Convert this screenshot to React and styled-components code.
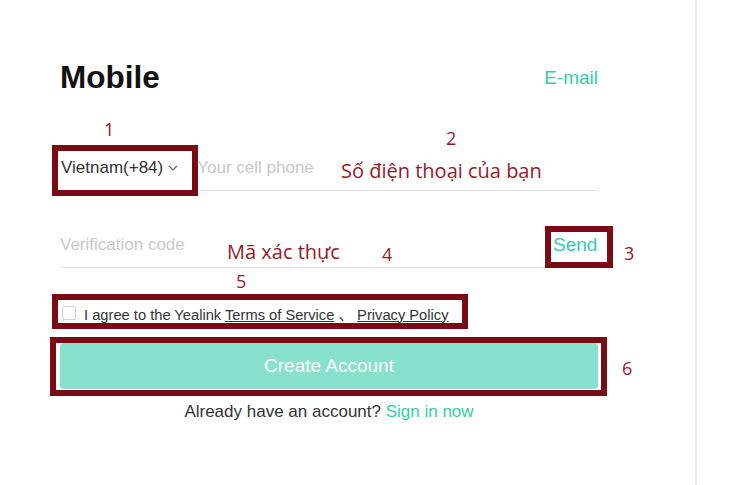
import styled, { css, createGlobalStyle } from "styled-components"

const GlobalStyle = createGlobalStyle`
  body {
    margin: 0;
    background: #fff;
    font-family: "Liberation Sans", Arial, "Noto Sans CJK SC", sans-serif;
  }
`

const teal = "#2fcfab"
const maroon = "#7a0a14"
const noteRed = "#9a1826"

// red frame the annotator drew round a part of the form
const marked = css`
  outline: 6px solid ${maroon};
  outline-offset: 0;
`

const Page = styled.div`
  display: flex;
  min-height: 485px;
`

const Panel = styled.div`
  position: relative;
  box-sizing: border-box;
  width: 697px;
  min-height: 485px;
  padding: 62px 97px 0 60px;
  border-right: 2px solid #ececec;
`

const Header = styled.div`
  display: flex;
  justify-content: space-between;
  align-items: flex-start;
  height: 30px;
`

const Title = styled.h1`
  margin: 0;
  font-size: 31.5px;
  line-height: 30px;
  font-weight: 700;
  color: #111;
`

const Tab = styled.a`
  margin-top: 6px;
  font-size: 19px;
  line-height: 19px;
  color: ${teal};
  text-decoration: none;
  cursor: pointer;
`

const Field = styled.div`
  display: flex;
  align-items: center;
  height: 44px;
  margin-top: ${p => p.$gap}px;
  border-bottom: 1px solid #e0e0e0;
`

const CountrySelect = styled.button`
  display: inline-flex;
  align-items: center;
  gap: 5px;
  align-self: flex-end;
  height: 39px;
  margin: 0 5px 0 -2px;
  padding: 0 14px 6px 3px;
  border: none;
  background: none;
  font-family: inherit;
  font-size: 17px;
  color: #333;
  cursor: pointer;
  ${p => p.$marked && marked}

  svg {
    margin-top: 1px;
  }
`

const Input = styled.input`
  flex: 1;
  min-width: 0;
  padding: 0;
  border: none;
  outline: none;
  background: transparent;
  font-family: inherit;
  font-size: 17px;
  color: #333;

  &::placeholder {
    color: #c9c9c9;
  }
`

const SendButton = styled.button`
  align-self: flex-end;
  width: 56px;
  height: 30px;
  margin: 0 -9px 5px 0;
  padding: 0 0 5px 2px;
  border: none;
  background: #fff;
  text-align: left;
  font-family: inherit;
  font-size: 19px;
  color: ${teal};
  cursor: pointer;
  ${p => p.$marked && marked}
`

const AgreeRow = styled.label`
  display: flex;
  align-items: center;
  gap: 8px;
  width: fit-content;
  height: 23px;
  box-sizing: border-box;
  margin: 32px 0 0 -2px;
  padding: 3px 13px 0 4px;
  font-size: 14.7px;
  color: #333;
  white-space: nowrap;
  ${p => p.$marked && marked}
`

const Check = styled.span`
  box-sizing: border-box;
  width: 14px;
  height: 14px;
  border: 1px solid #cfcfcf;
  border-radius: 2px;
`

const Link = styled.a`
  color: #333;
  text-decoration: underline;
  cursor: pointer;
`

const Sep = styled.span`
  margin: 0 4px;
  font-family: "Noto Sans CJK SC", sans-serif;
`

const ButtonFrame = styled.div`
  margin: 20px -3px 0 -4px;
  padding: 0 3px 1px 4px;
  ${p => p.$marked && marked}
`

const CreateButton = styled.button`
  display: block;
  width: 100%;
  height: 46px;
  border: none;
  border-radius: 4px;
  background: #88e1cc;
  font-family: inherit;
  font-size: 19px;
  color: #fff;
  cursor: pointer;
`

const SignIn = styled.p`
  margin: 12px 0 0;
  text-align: center;
  font-size: 17px;
  line-height: 20px;
  color: #333;

  a {
    color: ${teal};
    text-decoration: none;
  }
`

// numbers and notes written over the screenshot
const Note = styled.span`
  position: absolute;
  left: ${p => p.$x}px;
  top: ${p => p.$y}px;
  font-family: "Open Sans", "Noto Sans", sans-serif;
  font-size: ${p => p.$size || 18}px;
  line-height: ${p => p.$size || 18}px;
  font-weight: 500;
  color: ${noteRed};
  white-space: nowrap;
  pointer-events: none;
`

const Chevron = () => (
  <svg width="10" height="6" viewBox="0 0 10 6">
    <path d="M1 1l4 4 4-4" fill="none" stroke="#666" strokeWidth="1.2" />
  </svg>
)

export default function App() {
  return (
    <Page>
      <GlobalStyle />
      <Panel>
        <Header>
          <Title>Mobile</Title>
          <Tab>E-mail</Tab>
        </Header>

        <Field $gap={54}>
          <CountrySelect $marked>
            Vietnam(+84)
            <Chevron />
          </CountrySelect>
          <Input placeholder="Your cell phone" />
        </Field>

        <Field $gap={32}>
          <Input placeholder="Verification code" />
          <SendButton $marked>Send</SendButton>
        </Field>

        <AgreeRow $marked>
          <Check />
          <span>
            I agree to the Yealink <Link>Terms of Service</Link>
            <Sep>、</Sep>
            <Link>Privacy Policy</Link>
          </span>
        </AgreeRow>

        <ButtonFrame $marked>
          <CreateButton>Create Account</CreateButton>
        </ButtonFrame>

        <SignIn>
          Already have an account? <a>Sign in now</a>
        </SignIn>

        <Note $x={104} $y={120}>1</Note>
        <Note $x={446} $y={129}>2</Note>
        <Note $x={624} $y={244}>3</Note>
        <Note $x={382} $y={245}>4</Note>
        <Note $x={236} $y={272}>5</Note>
        <Note $x={622} $y={359}>6</Note>

        <Note $x={341} $y={161} $size={20}>Số điện thoại của bạn</Note>
        <Note $x={227} $y={242} $size={20}>Mã xác thực</Note>
      </Panel>
    </Page>
  )
}
